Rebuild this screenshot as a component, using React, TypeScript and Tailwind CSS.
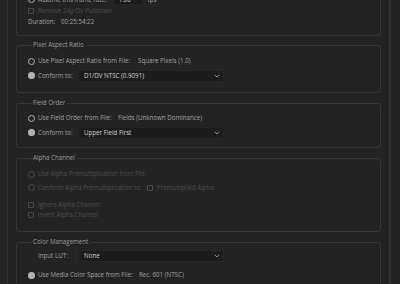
import type { ReactNode } from "react";

const font = { fontFamily: '"Open Sans", "Liberation Sans", sans-serif' };

const Radio = ({ on, dim }: { on?: boolean; dim?: boolean }) => (
  <span
    className={`mr-[3px] inline-block h-[7px] w-[7px] shrink-0 rounded-full ${
      dim
        ? "border border-[#4a4a4a]"
        : on
          ? "bg-[#b4b4b4]"
          : "border border-[#b4b4b4]"
    }`}
  />
);

const Check = ({ dim }: { dim?: boolean }) => (
  <span
    className={`mr-[4px] inline-block h-[6px] w-[6px] shrink-0 rounded-[1px] border ${
      dim ? "border-[#4a4a4a]" : "border-[#9a9a9a]"
    }`}
  />
);

const Select = ({ value }: { value: string }) => (
  <div className="ml-auto mr-0 flex h-[12px] w-[146px] items-center justify-between rounded-[2px] border border-[#262626] bg-[#1c1c1c] pl-[5px] pr-[3px] text-[#d2d2d2]">
    <span>{value}</span>
    <svg width="6" height="4" viewBox="0 0 6 4" fill="none">
      <path d="M0.8 0.8 L3 3 L5.2 0.8" stroke="#9a9a9a" strokeWidth="0.9" />
    </svg>
  </div>
);

const Group = ({
  title,
  children,
  className = "",
}: {
  title?: string;
  children: ReactNode;
  className?: string;
}) => (
  <fieldset
    className={`rounded-[3px] border border-[#363636] pl-[11px] pr-[10px] ${className}`}
  >
    {title && (
      <legend className="ml-[3px] px-[2px] text-[6.2px] leading-[8px] text-[#9c9c9c]">
        {title}
      </legend>
    )}
    {children}
  </fieldset>
);

export default function App() {
  return (
    <div
      className="h-[284px] w-[400px] overflow-hidden bg-[#232323] text-[6.2px] text-[#a2a2a2]"
      style={font}
    >
      <div className="ml-[7px] flex h-full w-[384px] border-l border-r border-[#2f2f2f]">
        <div className="w-[373px] pl-[8px]">
          {/* Frame rate group, cut at the top */}
          <Group className="-mt-[6px] border-t-0 pb-[8px] pt-0">
            <div className="flex h-[11px] items-center">
              <Radio />
              <span>Assume this frame rate:</span>
              <div className="ml-[8px] flex h-[9px] w-[27px] items-center bg-[#1a1a1a] pl-[4px] text-[#d2d2d2]">
                1.00
              </div>
              <span className="ml-[6px]">fps</span>
            </div>
            <div className="flex h-[11px] items-center text-[#4c4c4c]">
              <Check dim />
              <span>Remove 24p DV Pulldown</span>
            </div>
            <div className="flex h-[11px] items-center">
              <span className="w-[33px]">Duration:</span>
              <span>00:25:54:22</span>
            </div>
          </Group>

          <Group title="Pixel Aspect Ratio" className="mt-[5px] pb-[10px] pt-[6px]">
            <div className="flex h-[12px] items-center">
              <Radio />
              <span className="w-[100px] shrink-0">Use Pixel Aspect Ratio from File:</span>
              <span>Square Pixels (1.0)</span>
            </div>
            <div className="mt-[2px] flex h-[13px] w-[196px] items-center">
              <Radio on />
              <span>Conform to:</span>
              <Select value="D1/DV NTSC (0.9091)" />
            </div>
          </Group>

          <Group title="Field Order" className="mt-[6px] pb-[8px] pt-[5px]">
            <div className="flex h-[12px] items-center">
              <Radio />
              <span className="w-[80px] shrink-0">Use Field Order from File:</span>
              <span>Fields (Unknown Dominance)</span>
            </div>
            <div className="mt-[2px] flex h-[13px] w-[196px] items-center">
              <Radio on />
              <span>Conform to:</span>
              <Select value="Upper Field First" />
            </div>
          </Group>

          <Group title="Alpha Channel" className="mt-[6px] pb-[11px] pt-[6px] text-[#4e4e4e]">
            <div className="flex h-[12px] items-center">
              <Radio dim />
              <span>Use Alpha Premultiplication from File</span>
            </div>
            <div className="mt-[1px] flex h-[13px] items-center">
              <Radio dim />
              <span className="w-[109px] shrink-0">Conform Alpha Premultiplication to:</span>
              <Check dim />
              <span>Premultiplied Alpha</span>
            </div>
            <div className="mt-[6px] flex h-[10px] items-center">
              <Check dim />
              <span>Ignore Alpha Channel</span>
            </div>
            <div className="flex h-[10px] items-center">
              <Check dim />
              <span>Invert Alpha Channel</span>
            </div>
          </Group>

          <Group title="Color Management" className="mt-[6px] pb-[8px] pt-[4px]">
            <div className="flex h-[12px] w-[196px] items-center pl-[10px]">
              <span>Input LUT:</span>
              <Select value="None" />
            </div>
            <div className="mt-[7px] flex h-[12px] items-center">
              <Radio on />
              <span className="w-[101px] shrink-0">Use Media Color Space from File:</span>
              <span>Rec. 601 (NTSC)</span>
            </div>
            <div className="flex h-[12px] items-center">
              <Radio on />
              <span>Override Media Color Space to:</span>
            </div>
          </Group>
        </div>
        <div className="ml-auto h-full w-[2px] border-r border-[#2f2f2f]" />
      </div>
    </div>
  );
}
